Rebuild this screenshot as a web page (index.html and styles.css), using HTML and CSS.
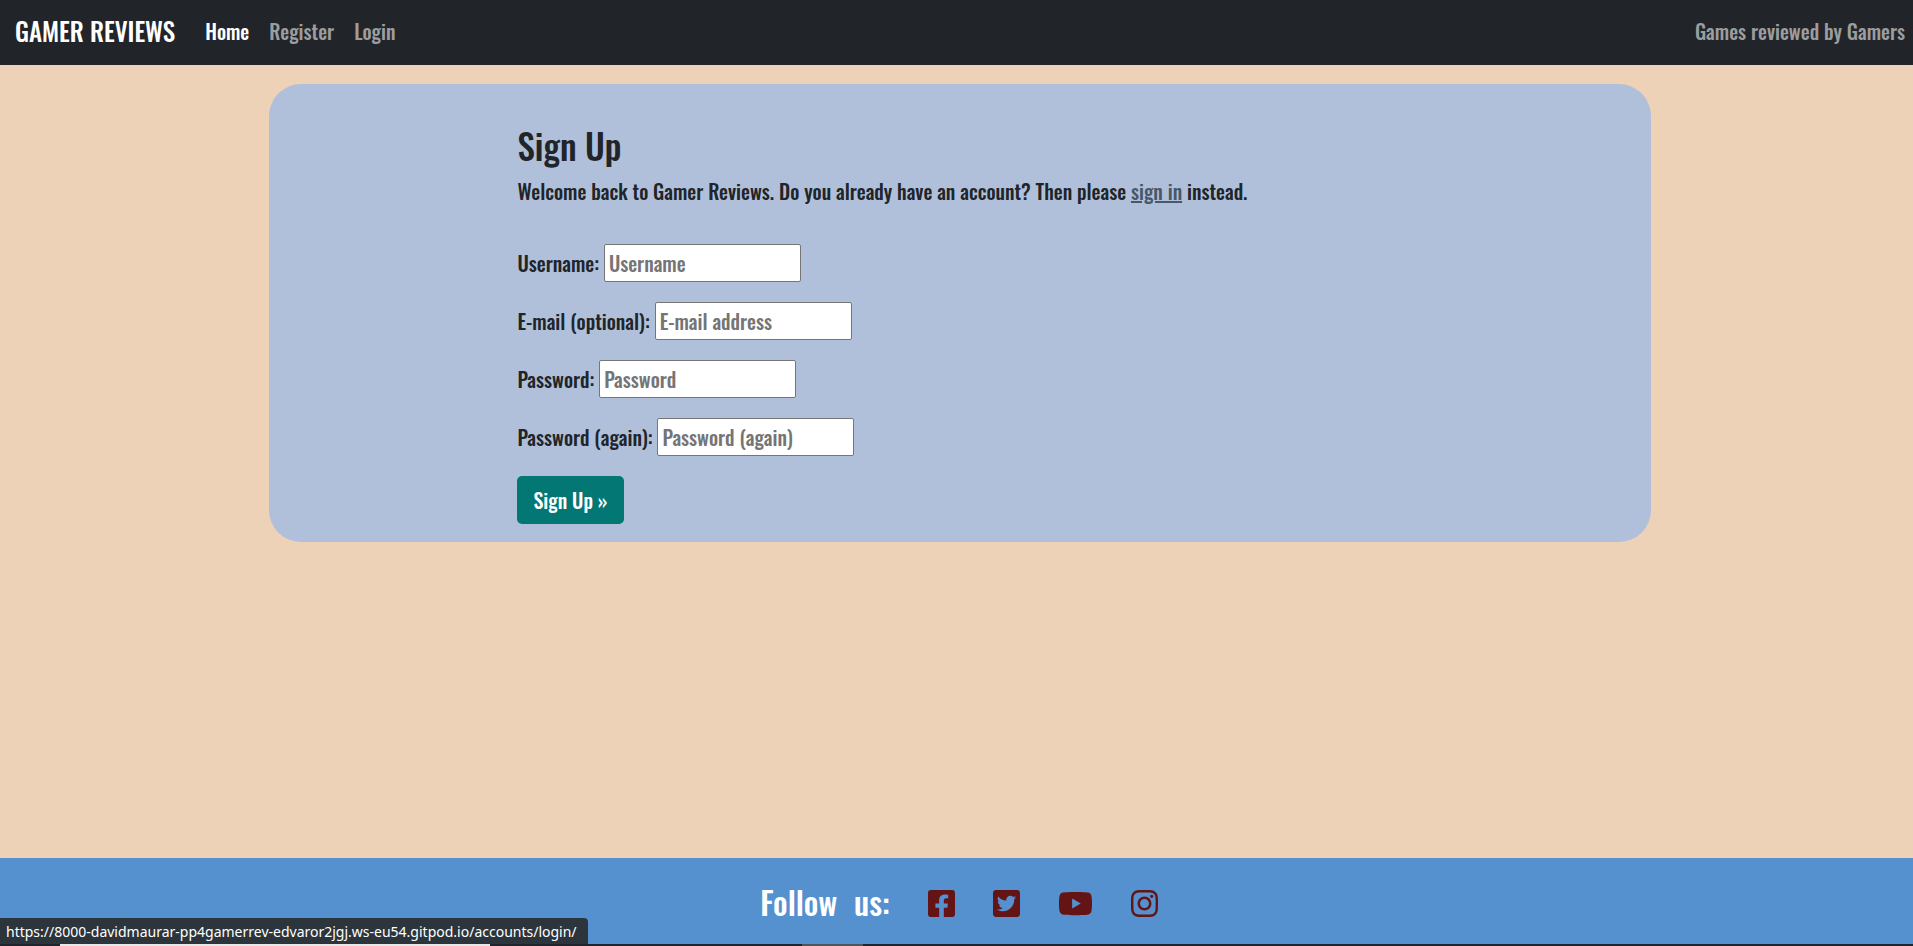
FILE: index.html
```html
<!DOCTYPE html>
<html lang="en">
<head>
<meta charset="utf-8">
<title>Gamer Reviews</title>
<link rel="stylesheet" href="styles.css">
</head>
<body>
<header class="navbar">
  <a class="brand" href="#">GAMER REVIEWS</a>
  <nav class="nav-links">
    <a class="active" href="#">Home</a>
    <a href="#">Register</a>
    <a href="#">Login</a>
  </nav>
  <span class="tagline">Games reviewed by Gamers</span>
</header>
<main class="page">
  <section class="card">
    <h1>Sign Up</h1>
    <p class="intro">Welcome back to Gamer Reviews. Do you already have an account? Then please <a href="#">sign in</a> instead.</p>
    <form>
      <p class="field"><label for="username">Username:</label> <input id="username" type="text" placeholder="Username"></p>
      <p class="field"><label for="email">E-mail (optional):</label> <input id="email" type="email" placeholder="E-mail address"></p>
      <p class="field"><label for="password1">Password:</label> <input id="password1" type="password" placeholder="Password"></p>
      <p class="field"><label for="password2">Password (again):</label> <input id="password2" type="password" placeholder="Password (again)"></p>
      <button class="submit" type="submit">Sign Up »</button>
    </form>
  </section>
</main>
<footer class="footer">
  <h2>Follow <span>us:</span></h2>
  <a href="#" aria-label="Facebook"><svg width="27" height="31" viewBox="0 0 448 512"><path d="M400 32H48A48 48 0 0 0 0 80v352a48 48 0 0 0 48 48h137.250V327.690h-63V256h63v-54.640c0-62.150 37-96.480 93.670-96.480 27.140 0 55.520 4.840 55.520 4.840v61h-31.270c-30.810 0-40.420 19.120-40.420 38.730V256h68.780l-11 71.690h-57.780V480H400a48 48 0 0 0 48-48V80a48 48 0 0 0-48-48z"/></svg></a>
  <a href="#" aria-label="Twitter"><svg width="27" height="31" viewBox="0 0 448 512"><path d="M400 32H48C21.500 32 0 53.500 0 80v352c0 26.500 21.500 48 48 48h352c26.500 0 48-21.500 48-48V80c0-26.500-21.500-48-48-48zm-48.900 158.800c.2 2.800.2 5.700.2 8.500 0 86.700-66 186.600-186.600 186.600-37.200 0-71.700-10.800-100.700-29.400 5.300.6 10.400.8 15.800.8 30.700 0 58.900-10.400 81.400-28-28.800-.6-53-19.500-61.300-45.500 10.100 1.500 19.200 1.500 29.600-1.200-30-6.100-52.500-32.500-52.500-64.400v-.8c8.700 4.900 18.900 7.900 29.600 8.300a65.447 65.447 0 0 1-29.200-54.600c0-12.200 3.200-23.400 8.900-33.100 32.300 39.800 80.800 65.800 135.200 68.600-9.300-44.500 24-80.600 64-80.600 18.900 0 35.900 7.900 47.900 20.700 14.800-2.800 29-8.300 41.600-15.800-4.900 15.200-15.200 28-28.800 36.100 13.200-1.400 26-5.100 37.800-10.200-8.900 13.100-20.100 24.700-32.900 34z"/></svg></a>
  <a href="#" aria-label="YouTube"><svg width="35" height="31" viewBox="0 0 576 512"><path d="M549.655 124.083c-6.281-23.650-24.787-42.276-48.284-48.597C458.781 64 288 64 288 64S117.220 64 74.629 75.486c-23.497 6.322-42.003 24.947-48.284 48.597-11.412 42.867-11.412 132.305-11.412 132.305s0 89.438 11.412 132.305c6.281 23.650 24.787 41.500 48.284 47.821C117.220 448 288 448 288 448s170.780 0 213.371-11.486c23.497-6.321 42.003-24.171 48.284-47.821 11.412-42.867 11.412-132.305 11.412-132.305s0-89.438-11.412-132.305zm-317.510 213.508V175.185l142.739 81.205-142.739 81.201z"/></svg></a>
  <a href="#" aria-label="Instagram"><svg width="27" height="31" viewBox="0 0 448 512"><path d="M224.100 141c-63.600 0-114.900 51.300-114.900 114.900s51.300 114.900 114.900 114.900S339 319.500 339 255.900 287.700 141 224.100 141zm0 189.600c-41.100 0-74.700-33.500-74.700-74.700s33.500-74.700 74.700-74.700 74.700 33.500 74.700 74.700-33.600 74.700-74.700 74.700zm146.400-194.300c0 14.900-12 26.800-26.800 26.800-14.900 0-26.800-12-26.800-26.800s12-26.800 26.800-26.800 26.800 12 26.800 26.800zm76.100 27.200c-1.700-35.900-9.900-67.700-36.200-93.900-26.200-26.200-58-34.400-93.900-36.200-37-2.100-147.900-2.100-184.900 0-35.800 1.700-67.600 9.900-93.900 36.100s-34.400 58-36.200 93.900c-2.100 37-2.100 147.900 0 184.900 1.700 35.900 9.900 67.700 36.200 93.900s58 34.400 93.900 36.200c37 2.100 147.900 2.100 184.900 0 35.900-1.700 67.700-9.900 93.900-36.200 26.200-26.200 34.400-58 36.200-93.900 2.100-37 2.100-147.800 0-184.800zM398.800 388c-7.800 19.600-22.900 34.700-42.600 42.600-29.500 11.700-99.500 9-132.100 9s-102.700 2.600-132.100-9c-19.600-7.800-34.700-22.900-42.600-42.600-11.700-29.500-9-99.500-9-132.100s-2.600-102.700 9-132.100c7.800-19.600 22.900-34.700 42.600-42.600 29.500-11.700 99.500-9 132.100-9s102.700-2.600 132.100 9c19.600 7.800 34.700 22.900 42.600 42.600 11.700 29.500 9 99.500 9 132.100s2.700 102.700-9 132.100z"/></svg></a>
</footer>
<div class="taskbar"><span class="window-edge"></span><span class="task-edge"></span></div>
<div class="status">https://8000-davidmaurar-pp4gamerrev-edvaror2jgj.ws-eu54.gitpod.io/accounts/login/</div>
</body>
</html>
```
FILE: styles.css
```css
* { box-sizing: border-box; }
body {
  margin: 0;
  min-height: 100vh;
  display: flex;
  flex-direction: column;
  background: #edd2b7;
  color: #212529;
  font: 500 20px/30px Oswald, "Liberation Sans Narrow", "Liberation Sans", sans-serif;
}
.navbar {
  display: flex;
  align-items: center;
  min-height: 65px;
  padding: 0 8px 4px 15px;
  background: #212529;
}
.brand { color: #fff; font-size: 25px; text-decoration: none; margin-right: 30px; }
.nav-links { display: flex; gap: 20px; }
.nav-links a { color: #9b9d9e; text-decoration: none; }
.nav-links .active { color: #fff; }
.tagline { margin-left: auto; color: #9b9d9e; }
.page { flex: 1; }
.card {
  width: 72.25%;
  margin: 19px 0 0 14.05%;
  padding: 38px 16px 18px 13%;
  border-radius: 32px;
  background: #b0c0da;
}
h1 { margin: 0 0 8px; font-size: 35px; line-height: 46px; font-weight: 500; }
.intro { margin: 0 0 38px; }
.intro a { color: #495868; }
.field { margin: 0 0 20px; line-height: 38px; }
.field input {
  width: 197px;
  height: 38px;
  padding: 1px 4px;
  border: 1px solid #767676;
  border-radius: 2px;
  background: #fff;
  font: inherit;
  line-height: 30px;
  vertical-align: top;
}
.field input::placeholder { color: #757575; }
.submit {
  height: 48px;
  padding: 0 16px;
  display: block;
  border: 0;
  border-radius: 5px;
  background: #037774;
  color: #fff;
  font: inherit;
}
.footer {
  display: flex;
  justify-content: center;
  align-items: center;
  gap: 38px;
  min-height: 86px;
  padding: 1px 0 0 5px;
  background: #5591cf;
}
.footer h2 { margin: 0; color: #fff; font-size: 32px; line-height: 40px; font-weight: 500; }
.footer h2 span { margin-left: 9px; }
.footer a { display: flex; padding-top: 4px; }
.footer svg { fill: #641414; }
.taskbar { display: flex; height: 2px; background: #20242c; }
.window-edge { width: 430px; margin-left: 60px; background: #e8e8e8; }
.task-edge { width: 61px; margin-left: 312px; background: #50555c; }
.status {
  position: fixed;
  left: 0;
  bottom: 2px;
  padding: 3px 11px 1px 6px;
  border-radius: 0 4px 0 0;
  background: #2c353b;
  color: #fff;
  font: 14px/22px "Noto Sans", "Open Sans", sans-serif;
}
```
